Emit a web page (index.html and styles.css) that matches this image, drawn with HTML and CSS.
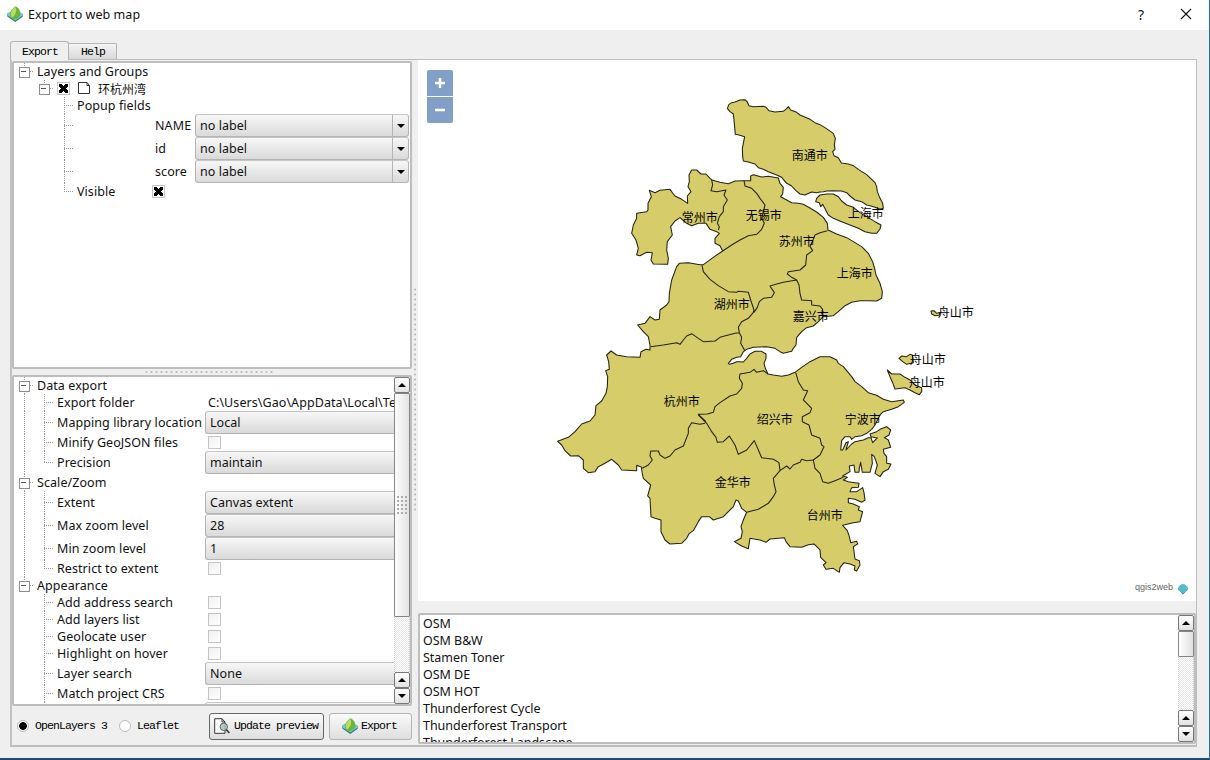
FILE: index.html
```html
<!DOCTYPE html>
<html lang="en">
<head>
<meta charset="utf-8">
<title>Export to web map</title>
<link rel="stylesheet" href="styles.css">
</head>
<body>
<svg class="defs" width="0" height="0">
  <symbol id="leaf" viewBox="0 0 16 16">
    <path d="M.3 7.500L8 4l7.700 4v2.800L8.300 15.900.3 10.500z" fill="#2b7686"/>
    <path d="M.3 7.200L8 4l7.700 3.800v1.800l-7.400 4.800L.3 9.300z" fill="#6fcbd6"/>
    <path d="M5.200 12.800C1.800 10.500 1.700 4.500 8.600.2c3.200 1.600 5.400 5 4.700 8.300-.6 3-4.600 5.300-8.100 4.300z" fill="#6cb43a"/>
    <path d="M5 11.600C2.700 8.500 3.500 4.200 8.500 1c1.600 3.400.5 7.600-3.500 10.600z" fill="#b9dd62"/>
  </symbol>
</svg>
<div class="window">
  <header class="titlebar">
    <svg class="app-icon"><use href="#leaf"/></svg>
    <span class="title">Export to web map</span>
    <span class="help">?</span>
    <svg class="close" viewBox="0 0 12 12"><path d="M1 1l10 10M11 1L1 11"/></svg>
  </header>
  <main class="body">
    <nav class="tabs"><span class="tab active">Export</span><span class="tab">Help</span></nav>
    <section class="pane">
      <div class="left">
        <div class="panel layers">
          <div class="row"><i class="g box first"></i><span class="t">Layers and Groups</span></div>
          <div class="row"><i class="g"></i><i class="g box first"></i><i class="check on"></i>
            <svg class="poly" viewBox="0 0 14 14"><path d="M1.500 1.500h8.500l2.500 3v8h-11zM10 1.500v3h2.500"/></svg><span class="t cjk">环杭州湾</span></div>
          <div class="row"><i class="g"></i><i class="g"></i><i class="g tee"></i><span class="t">Popup fields</span></div>
          <div class="row tall"><i class="g"></i><i class="g"></i><i class="g tee"></i><span class="t field">NAME</span><span class="combo full">no label<b></b></span></div>
          <div class="row tall"><i class="g"></i><i class="g"></i><i class="g tee"></i><span class="t field">id</span><span class="combo full">no label<b></b></span></div>
          <div class="row tall"><i class="g"></i><i class="g"></i><i class="g tee"></i><span class="t field">score</span><span class="combo full">no label<b></b></span></div>
          <div class="row"><i class="g"></i><i class="g"></i><i class="g ell"></i><span class="t vis">Visible</span><i class="check on"></i></div>
        </div>
        <div class="hsplit"><i></i></div>
        <div class="panel options">
          <div class="rows">
            <div class="row"><i class="g box"></i><span class="t">Data export</span></div>
            <div class="row"><i class="g line"></i><i class="g tee"></i><span class="t key">Export folder</span><span class="path">C:\Users\Gao\AppData\Local\Te</span></div>
            <div class="row tall"><i class="g line"></i><i class="g tee"></i><span class="t key">Mapping library location</span><span class="combo">Local</span></div>
            <div class="row"><i class="g line"></i><i class="g tee"></i><span class="t key">Minify GeoJSON files</span><i class="check"></i></div>
            <div class="row tall"><i class="g line"></i><i class="g ell"></i><span class="t key">Precision</span><span class="combo">maintain</span></div>
            <div class="row"><i class="g box"></i><span class="t">Scale/Zoom</span></div>
            <div class="row tall"><i class="g line"></i><i class="g tee"></i><span class="t key">Extent</span><span class="combo">Canvas extent</span></div>
            <div class="row tall"><i class="g line"></i><i class="g tee"></i><span class="t key">Max zoom level</span><span class="combo">28</span></div>
            <div class="row tall"><i class="g line"></i><i class="g tee"></i><span class="t key">Min zoom level</span><span class="combo">1</span></div>
            <div class="row"><i class="g line"></i><i class="g ell"></i><span class="t key">Restrict to extent</span><i class="check"></i></div>
            <div class="row"><i class="g box last"></i><span class="t">Appearance</span></div>
            <div class="row"><i class="g"></i><i class="g tee"></i><span class="t key">Add address search</span><i class="check"></i></div>
            <div class="row"><i class="g"></i><i class="g tee"></i><span class="t key">Add layers list</span><i class="check"></i></div>
            <div class="row"><i class="g"></i><i class="g tee"></i><span class="t key">Geolocate user</span><i class="check"></i></div>
            <div class="row"><i class="g"></i><i class="g tee"></i><span class="t key">Highlight on hover</span><i class="check"></i></div>
            <div class="row tall"><i class="g"></i><i class="g tee"></i><span class="t key">Layer search</span><span class="combo">None</span></div>
            <div class="row"><i class="g"></i><i class="g tee"></i><span class="t key">Match project CRS</span><i class="check"></i></div>
            <div class="row tall"><i class="g"></i><i class="g tee"></i><span class="t key"></span><span class="combo"></span></div>
          </div>
          <div class="scroll"><i class="btn up"></i><i class="thumb big"></i><i class="track"></i><i class="btn up"></i><i class="btn down"></i></div>
        </div>
        <div class="footer">
          <i class="radio on"></i><span class="rl first">OpenLayers 3</span>
          <i class="radio"></i><span class="rl">Leaflet</span>
          <button class="push default"><svg class="prev" viewBox="0 0 16 16"><path d="M.7.700h7.300l3 3.300v11.300H.7z" fill="#fff" stroke="#333"/><path d="M8 .7V4h3" fill="none" stroke="#333"/><circle cx="9.800" cy="8.800" r="3.700" fill="#a9c2bd" fill-opacity=".85" stroke="#5c6866"/><path d="M12.300 11.600l3 3.400" stroke="#444" stroke-width="1.800"/></svg>Update preview</button>
          <button class="push exp"><svg class="leafbtn"><use href="#leaf"/></svg>Export</button>
        </div>
      </div>
      <div class="vsplit"><i></i></div>
      <div class="right">
        <div class="map">
          <svg class="regions" viewBox="418 60 778 541">
            <g transform="translate(540 90) scale(.33333)">
              <path class="area" d="M290 370L320 365 324 360 324 340 334 320 328 301 345 308 360 301 390 298 400 312 405 318 425 328 443 340 442 318 453 305 444 290 448 275 447 255 455 240 470 240 483 252 498 252 510 265 518 271 540 277 565 281 585 273 612 272 632 272 632 258 640 254 665 261 685 259 715 264 720 280 730 292 728 312 722 320 740 330 755 338 775 340 790 343 810 354 830 366 850 382 862 400 864 420 890 432 920 443 945 458 965 470 985 490 998 515 1005 540 1008 555 1020 580 1027 605 1025 625 1010 633 985 632 960 632 935 637 915 647 895 665 880 677 850 680 835 695 820 708 800 713 785 725 770 742 768 765 760 775 755 784 730 790 720 785 705 775 680 770 660 771 640 772 620 778 610 785 602 800 590 802 575 808 565 820 569 823 580 820 590 815 600 815 610 816 620 805 630 792 645 784 665 784 678 792 678 805 672 820 676 835 684 852 700 855 725 859 745 855 765 847 785 832 810 815 840 800 870 800 890 810 895 820 910 830 925 848 935 860 945 875 965 890 985 908 1010 916 1030 928 1055 935 1090 930 1093 937 1075 950 1055 958 1030 965 1020 975 1005 1005 995 1018 980 1030 965 1037 945 1040 935 1048 930 1040 915 1040 905 1052 902 1080 908 1080 918 1058 925 1055 918 1080 935 1062 945 1055 970 1050 985 1043 993 1043 998 1058 1012 1044 993 1040 990 1032 1010 1025 1020 1018 1040 1010 1052 1020 1047 1035 1033 1043 1045 1050 1052 1072 1030 1078 1032 1090 1040 1100 1040 1120 1053 1122 1045 1138 1030 1145 1020 1160 1005 1150 1012 1125 1003 1100 995 1093 997 1120 990 1147 967 1147 962 1117 958 1135 957 1147 945 1147 942 1125 928 1128 930 1145 918 1152 908 1158 922 1162 910 1170 925 1175 945 1178 957 1180 955 1192 935 1193 930 1205 950 1205 968 1193 972 1208 975 1230 965 1237 945 1228 925 1225 925 1238 940 1242 958 1250 955 1260 968 1265 960 1295 940 1298 908 1306 922 1322 928 1340 932 1358 950 1354 953 1362 940 1370 945 1407 958 1412 960 1425 950 1443 943 1440 945 1428 930 1422 912 1418 900 1433 898 1447 880 1435 858 1438 850 1425 858 1418 842 1402 840 1380 822 1362 805 1364 785 1372 750 1370 738 1355 733 1343 690 1347 678 1357 660 1350 630 1345 625 1376 605 1368 583 1355 603 1345 607 1325 603 1310 610 1290 620 1267 605 1255 595 1233 588 1230 580 1250 550 1280 520 1290 508 1280 485 1280 475 1295 460 1322 448 1330 440 1345 425 1360 390 1362 375 1350 363 1325 363 1290 345 1285 333 1280 330 1225 323 1218 332 1185 310 1165 305 1140 305 1132 290 1126 290 1142 245 1140 235 1125 215 1108 195 1120 175 1130 165 1145 145 1148 130 1135 130 1110 115 1097 92 1098 75 1082 65 1065 53 1054 85 1042 105 1025 125 1002 150 993 165 975 168 947 185 933 198 910 202 890 203 860 197 842 208 838 206 815 200 795 213 783 230 795 260 800 300 802 303 785 318 778 330 780 330 765 325 740 310 725 293 705 315 700 330 680 345 690 358 688 360 660 380 645 387 635 388 610 395 570 410 530 418 520 445 518 480 524 490 524 520 502 548 483 540 467 525 460 525 445 538 430 530 425 510 418 498 400 475 400 455 407 440 400 420 383 405 393 392 410 397 435 382 455 380 480 385 505 383 523 340 522 333 510 337 488 320 487 300 497 290 495 295 475 288 450 275 430 280 405 290 385z"/>
              <g transform="translate(240 0)">
                <path class="area" d="M322 55L327 43 335 38 345 36 360 30 375 29 382 36 387 47 400 50 430 49 437 51 447 62 465 66 490 64 500 56 505 50 512 60 530 67 540 75 570 88 585 98 600 104 615 113 640 130 646 145 643 165 645 178 638 185 642 197 655 203 664 219 685 222 700 227 715 238 740 254 755 268 765 278 770 290 772 305 778 320 788 340 790 355 780 358 765 352 750 347 740 345 725 335 705 330 690 318 680 308 665 303 640 302 620 303 610 305 600 306 590 308 575 306 555 315 540 312 527 301 515 288 500 280 485 262 470 255 445 245 430 238 415 233 405 222 385 216 370 213 368 200 367 175 374 140 357 135 346 133 342 90 340 72 330 65z"/>
                <path class="area" d="M587 335L590 325 600 315 620 312 640 312 655 320 665 333 680 345 700 352 720 368 740 380 765 395 783 405 780 417 770 430 755 430 735 425 715 415 690 405 665 395 640 385 625 375 612 350 608 343 602 350 598 338z"/>
                <path class="edge" d="M275 270L278 285 273 302 290 305 318 300 312 315 322 330 310 350 310 365 298 380 292 400 298 410 295 420M372 272L375 288 395 295 410 310 420 325 435 345 430 365 425 385 433 400 425 418 410 433 385 437 360 450 335 465 308 483M622 422L600 428 585 435 578 452 570 470 578 482 560 495 557 525 540 540 505 545 502 552 515 562 530 570"/>
              </g>
              <g transform="translate(240 480)">
                <path class="edge" d="M246 46L250 65 270 88 295 107 325 125 350 127 355 124 385 127 392 150 402 180 400 187M402 187L412 172 418 155 430 145 455 142 463 128 450 108 470 102 490 97 530 90M530 90L537 105 540 130 545 150 575 152 575 165 600 168 608 178 605 190 610 200M400 187L385 205 365 215 355 232 358 248 345 250 325 255 300 262 285 273 250 275 235 265 215 251 200 258 190 270 180 283 170 278 130 285 92 290M358 248L365 262 362 280 375 303M444 372L430 362 410 367 402 358 390 367 360 372 358 385 367 400 365 415 350 432 330 438 300 458 285 470 280 487 262 492 235 493 258 515"/>
              </g>
              <g transform="translate(0 690)">
                <path class="edge" d="M495 310L480 313 455 308 445 325 445 340 430 378 405 390 390 408 375 415 360 405 355 393 332 393 330 408 337 420 325 435 307 445M475 285L500 310 515 335 528 352 532 367 550 365 568 348 585 375 595 403 620 390 643 362 655 390 665 413 700 418 717 428 720 452 740 438 750 447 760 435 780 427 785 418 800 422 820 420M720 452L700 475 703 495 708 515 700 530 685 550 655 568 620 577"/>
              </g>
              <g transform="translate(600 750)">
                <path class="edge" d="M167 97L175 125 190 150 203 152 190 180 215 205 210 218 187 230 187 245 207 255 215 285 240 295 245 315 252 320 240 345 220 360 225 385 240 400 248 425 265 430 285 422 310 412"/>
              </g>
              <g transform="translate(960 600)">
                <path class="area" d="M213 63L222 62 230 70 240 68 238 76 225 77 215 72zM117 205L125 198 140 200 150 193 157 195 160 218 140 223 128 215zM82 240L95 252 120 252 135 262 150 270 165 285 185 293 185 305 178 314 165 308 150 300 135 293 105 297 98 278 90 260z"/>
              </g>
            </g>
            <g class="names">
              <text x="809.7" y="160">南通市</text><text x="865.7" y="218">上海市</text><text x="699.7" y="222">常州市</text><text x="763.7" y="220">无锡市</text>
              <text x="796.7" y="246">苏州市</text><text x="854.7" y="278">上海市</text><text x="731.7" y="309">湖州市</text><text x="810.7" y="321">嘉兴市</text>
              <text x="681.7" y="406">杭州市</text><text x="774.7" y="424">绍兴市</text><text x="862.7" y="424">宁波市</text><text x="732.7" y="487">金华市</text>
              <text x="824.7" y="520">台州市</text><text x="955.7" y="317">舟山市</text><text x="927.7" y="364">舟山市</text><text x="926.7" y="387">舟山市</text>
            </g>
          </svg>
          <div class="zoom"><span><svg viewBox="0 0 26 26"><path d="M8 13h10M13 8v10"/></svg></span><span><svg viewBox="0 0 26 26"><path d="M8 13h10"/></svg></span></div>
          <div class="credit">qgis2web<svg viewBox="0 0 12 12"><path d="M.8 6L6 11.500 11.200 6z" fill="#287b88"/><path d="M.8 5.500C2 2.500 4 1 6 1s4 1.500 5.200 4.500L10 7.500 6 10.500 2 7.500z" fill="#57bcc8"/></svg></div>
        </div>
        <div class="basemaps">
          <div class="list">
            <div>OSM</div><div>OSM B&amp;W</div><div>Stamen Toner</div><div>OSM DE</div><div>OSM HOT</div><div>Thunderforest Cycle</div><div>Thunderforest Transport</div><div>Thunderforest Landscape</div>
          </div>
          <div class="scroll"><i class="btn up"></i><i class="thumb small"></i><i class="track"></i><i class="btn up"></i><i class="btn down"></i></div>
        </div>
      </div>
    </section>
  </main>
</div>
</body>
</html>
```
FILE: styles.css
```css
* { box-sizing: border-box; }
body { margin: 0; font: 12.5px/17px "Noto Sans", "Noto Sans CJK SC", sans-serif; color: #111; }
i { display: block; font-style: normal; flex: none; }
.defs { position: absolute; }
.window { width: 1210px; height: 760px; background: #efefef; border-right: 1px solid #1d6fa5; border-bottom: 2px solid #1b4a72; display: flex; flex-direction: column; overflow: hidden; }
.titlebar { height: 30px; background: #fff; display: flex; align-items: center; padding: 0 17px 0 7px; flex: none; }
.app-icon { width: 16px; height: 16px; margin-top: -2px; }
.title { margin-left: 5px; flex: 1; font-size: 12.5px; letter-spacing: .05px; margin-top: -1px; }
.help { font-size: 14px; margin-right: 36px; margin-top: -2px; }
.close { width: 12px; height: 12px; margin-top: -2px; fill: none; stroke: #111; stroke-width: 1.100; }

.body { flex: 1; padding: 11px 12px 11px 10px; display: flex; flex-direction: column; min-height: 0; }
.tabs { height: 18px; display: flex; align-items: flex-end; flex: none; font: 11.5px/14px "Liberation Mono", monospace; letter-spacing: -.9px; color: #000; }
.tab { width: 48px; height: 16px; border: 1px solid #b4b4b4; border-left: 0; border-bottom: 0; border-radius: 0 2px 0 0; background: linear-gradient(#f3f3f3, #d9d9d9); padding: 1px 0 0 12px; }
.tab.active { width: 59px; height: 19px; border-left: 1px solid #b4b4b4; border-radius: 3px 3px 0 0; background: #efefef; padding: 3px 0 0 11px; margin-bottom: -1px; position: relative; }
.pane { flex: 1; border: 2px solid #bdbdbd; border-top-width: 1px; border-left-color: #c2c2c2; border-right-width: 1px; display: flex; min-height: 0; }
.left { width: 400px; padding-top: 1px; flex: none; display: flex; flex-direction: column; }
.panel { border: 2px solid #bdbdbd; border-radius: 2px; background: #fff; overflow: hidden; flex: none; }
.layers { height: 308px; padding-top: 0; }
.options { height: 331px; display: flex; }
.rows { width: 380px; overflow: hidden; flex: none; }
.row { height: 17px; display: flex; align-items: center; white-space: nowrap; }
.row.tall { height: 23px; }
.t { margin-left: 3px; flex: none; letter-spacing: .07px; }
.field { margin-left: 81px; width: 40px; letter-spacing: .1px; }
.vis { width: 72px; }
.key { width: 148px; }
.cjk { margin-left: 7px; font: 12px/17px "Noto Sans CJK SC", sans-serif; letter-spacing: 0; }
.path { padding-left: 3px; letter-spacing: .07px; }

/* tree guides */
.g { width: 20px; height: 100%; background-repeat: no-repeat; }
.line, .tee, .ell, .box { --v: repeating-linear-gradient(#999 0 1px, transparent 1px 2px); --h: repeating-linear-gradient(90deg, #999 0 1px, transparent 1px 2px); }
.line { background-image: var(--v); background-position: 10px 0; background-size: 1px 100%; }
.tee { background-image: var(--v), var(--h); background-position: 10px 0, 10px 50%; background-size: 1px 100%, 10px 1px; }
.ell { background-image: var(--v), var(--h); background-position: 10px 0, 10px 50%; background-size: 1px 50%, 10px 1px; }
.box { position: relative; background-image: var(--v), var(--h); background-position: 10px 0, 14px 8px; background-size: 1px 100%, 6px 1px; }
.box.first, .box.last { background-size: 1px 4px, 6px 1px; }
.box::after { content: ""; position: absolute; left: 5px; top: 4px; width: 9px; height: 9px; border: 1px solid #8c8c8c; background: linear-gradient(#555, #555) 1px 3px / 5px 1px no-repeat #fff; }

.check { width: 13px; height: 13px; border: 1px solid #c4c4c4; background: linear-gradient(135deg, #f0f0f0, #fff); margin-left: 3px; }
.check.on { background: linear-gradient(45deg, transparent 35%, #000 35% 65%, transparent 65%) 1px 1px / 9px 9px no-repeat, linear-gradient(-45deg, transparent 35%, #000 35% 65%, transparent 65%) 1px 1px / 9px 9px no-repeat, #fff; }
.poly { width: 14px; height: 14px; margin: -2px 0 0 7px; fill: none; stroke: #333; }
.combo { flex: 1; height: 23px; border: 1px solid #b4b4b4; border-top-color: #c4c4c4; border-right: 0; border-radius: 3px 0 0 3px; background: linear-gradient(#f7f7f7, #dadada); padding-left: 4px; display: flex; align-items: center; letter-spacing: .05px; }
.combo.full { flex: none; width: 214px; border-right: 1px solid #b4b4b4; border-radius: 3px; justify-content: space-between; }
.combo b { width: 16px; height: 100%; border-left: 1px solid #b4b4b4; display: grid; place-items: center; }
.combo b::after { content: ""; border: 4px solid transparent; border-top-color: #000; border-bottom: 0; }

.hsplit { height: 6px; padding-right: 8px; display: flex; justify-content: center; align-items: center; flex: none; }
.hsplit i { width: 129px; height: 4px; background: radial-gradient(circle, #bdbdbd 1px, transparent 1.200px) 0 0 / 5px 4px; }
.vsplit { width: 6px; padding-bottom: 7px; display: flex; justify-content: center; align-items: center; flex: none; }
.vsplit i { width: 4px; height: 225px; background: radial-gradient(circle, #bdbdbd 1px, transparent 1.200px) 0 0 / 4px 5px; }

.scroll { width: 16px; display: flex; flex-direction: column; flex: none; }
.btn { height: 16px; border: 1px solid #777; border-radius: 2px; background: linear-gradient(#fff, #e2e2e2); display: grid; place-items: center; }
.btn::after { content: ""; border: 4px solid transparent; }
.up::after { border-bottom-color: #000; border-top: 0; }
.down::after { border-top-color: #000; border-bottom: 0; }
.thumb { border: 1px solid #858585; border-radius: 1px; background: linear-gradient(90deg, #fff, #e0e0e0); }
.big { height: 224px; background: linear-gradient(90deg, #fdfdfd, #e2e2e2); position: relative; }
.big::after { content: ""; position: absolute; left: 1px; top: 101px; width: 12px; height: 20px; background: radial-gradient(circle, #aaa .7px, transparent 1px) 0 0 / 4px 4px; }
.small { height: 26px; }
.track { flex: 1; background: repeating-conic-gradient(#e9e9e9 0 25%, #fff 0 50%) 0 0 / 2px 2px; border: 1px dotted #ccc; border-width: 0 1px; }

.footer { flex: 1; display: flex; align-items: center; padding: 1px 0 0 5px; font: 11.5px/14px "Liberation Mono", monospace; letter-spacing: -.9px; color: #000; }
.radio { width: 12px; height: 12px; border: 1px solid #bbb; border-radius: 50%; background: #fff; }
.radio.on { background: radial-gradient(circle, #000 3.500px, #fff 4.200px); }
.rl { margin-left: 6px; width: 72px; }
.rl.first { width: 84px; }
.push { height: 27px; margin: 0; border: 1px solid #b4b4b4; border-radius: 3px; background: linear-gradient(#fafafa, #dedede); font: inherit; letter-spacing: inherit; color: inherit; display: flex; align-items: center; flex: none; white-space: nowrap; padding: 0 0 0 4px; }
.default { width: 115px; border-color: #666; }
.exp { width: 83px; margin-left: 5px; padding-left: 12px; }
.prev { width: 16px; height: 16px; margin-right: 4px; }
.leafbtn { width: 16px; height: 16px; margin-right: 3px; }

.right { flex: 1; display: flex; flex-direction: column; min-width: 0; }
.map { height: 541px; background: #fff; position: relative; flex: none; }
.regions { display: block; width: 778px; height: 541px; }
.area { fill: #d6cd6a; stroke: #25230f; stroke-width: 3.200; stroke-linejoin: round; }
.edge { fill: none; stroke: #25230f; stroke-width: 3.200; stroke-linejoin: round; }
.names { font: 12px "Noto Sans CJK SC", sans-serif; fill: #000; text-anchor: middle; }
.zoom { position: absolute; left: 9px; top: 10px; display: flex; flex-direction: column; gap: 1px; }
.zoom span { width: 26px; height: 26px; background: #819fc7; border-radius: 2px 2px 0 0; }
.zoom span + span { border-radius: 0 0 2px 2px; }
.zoom svg { display: block; stroke: #fff; stroke-width: 2.500; }
.credit { position: absolute; right: 7px; bottom: 6px; display: flex; align-items: center; gap: 4px; font: 9px/16px "Liberation Sans", sans-serif; color: #666; }
.credit svg { width: 12px; height: 12px; margin-top: 3px; }
.basemaps { height: 131px; margin-top: 12px; border: 2px solid #bdbdbd; border-radius: 2px; background: #fff; display: flex; overflow: hidden; flex: none; }
.list { flex: 1; padding-left: 3px; letter-spacing: -.03px; }
```
